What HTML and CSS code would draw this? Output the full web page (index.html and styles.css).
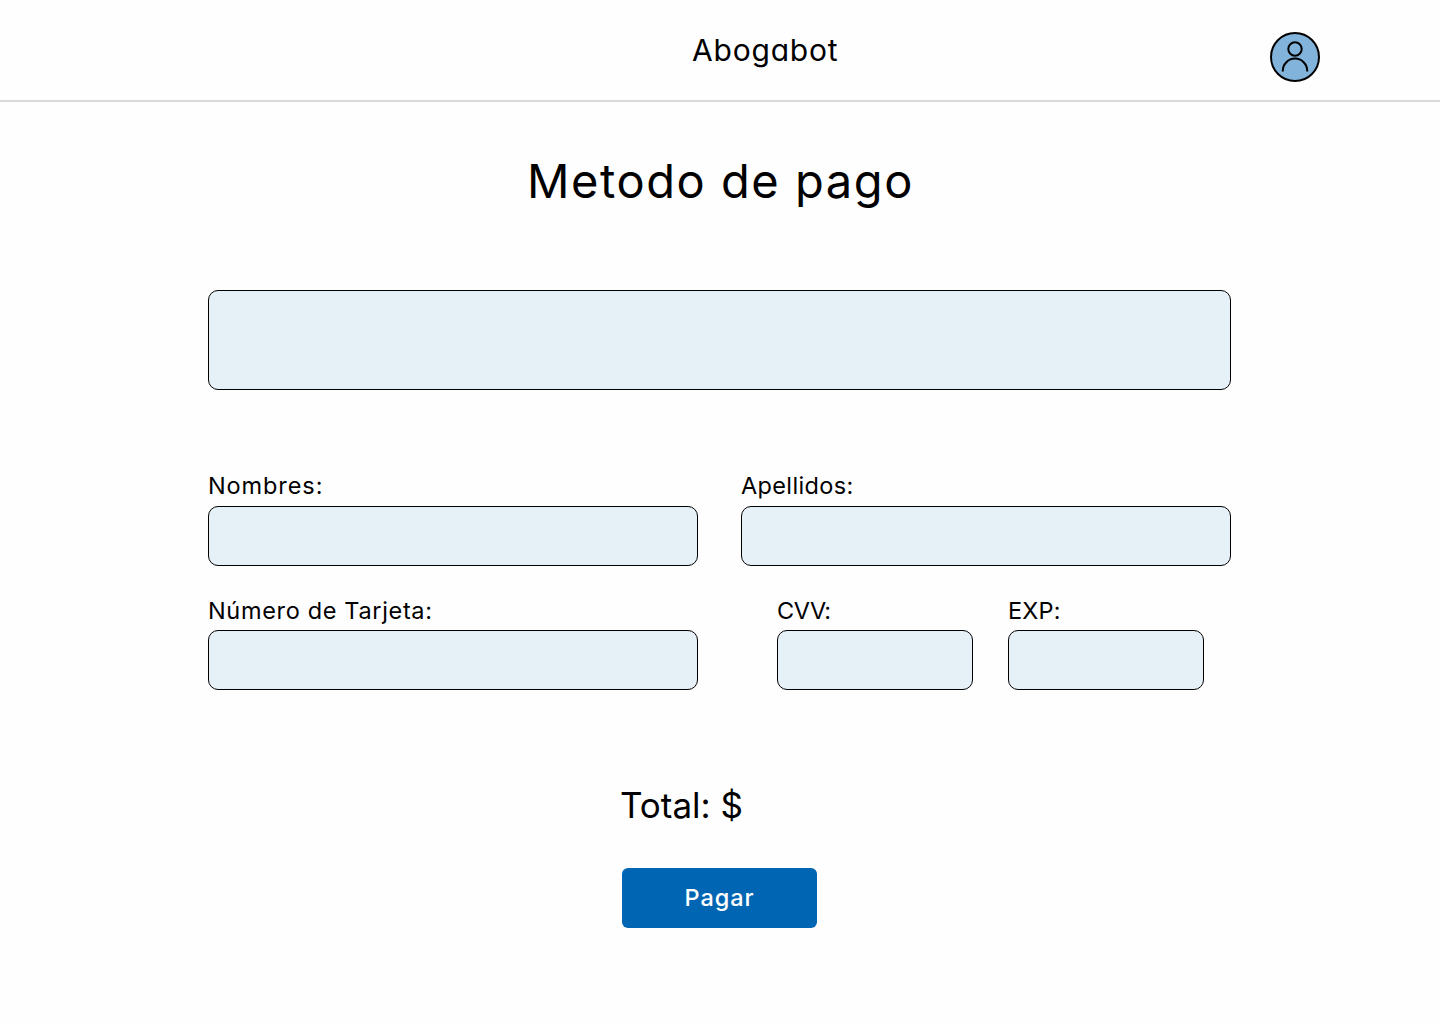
FILE: index.html
```html
<!DOCTYPE html>
<html lang="es">
<head>
<meta charset="utf-8">
<title>Abogabot</title>
<link rel="stylesheet" href="styles.css">
</head>
<body>
<header class="topbar">
  <span class="brand">Abogabot</span>
  <svg class="avatar" viewBox="0 0 50 50" width="50" height="50" fill="none" stroke="#000" stroke-width="2">
    <circle cx="25" cy="25" r="24" fill="#82b3db"/>
    <circle cx="25" cy="17" r="6.7"/>
    <path d="M12.8 39.6V38.8a12.2 12.2 0 0 1 24.4 0V39.6"/>
  </svg>
</header>
<main class="page">
  <h1 class="title">Metodo de pago</h1>
  <div class="box summary"></div>
  <form class="form">
    <div class="row">
      <label class="field wide"><span class="label l-nombres">Nombres:</span><input class="box input"></label>
      <label class="field wide"><span class="label l-apellidos">Apellidos:</span><input class="box input"></label>
    </div>
    <div class="row row-card">
      <label class="field wide"><span class="label l-tarjeta">Número de Tarjeta:</span><input class="box input"></label>
      <div class="codes">
        <label class="field small"><span class="label l-cvv">CVV:</span><input class="box input"></label>
        <label class="field small"><span class="label l-exp">EXP:</span><input class="box input"></label>
      </div>
    </div>
    <div class="checkout">
      <div class="total">Total: $</div>
      <button class="pay" type="button">Pagar</button>
    </div>
  </form>
</main>
</body>
</html>
```
FILE: styles.css
```css
* { box-sizing: border-box; }
body {
  margin: 0;
  min-height: 1024px;
  background: #fefefe;
  color: #000;
  font-family: Inter, "Open Sans", sans-serif;
  font-weight: 400;
}
.topbar {
  display: grid;
  grid-template-columns: 1fr 50px;
  height: 102px;
  padding: 32px 120px 0 692px;
  border-bottom: 2px solid #d9d9d9;
}
.brand {
  font-size: 30px;
  line-height: 37px;
  font-weight: 400;
  letter-spacing: 0.8px;
  font-feature-settings: "cv11";
  white-space: nowrap;
}
.avatar { display: block; }
.page {
  width: 1023px;
  margin-left: 208px;
  padding-top: 49px;
}
.title {
  margin: 0 0 79px;
  padding-left: 319px;
  font-size: 47px;
  line-height: 60px;
  font-weight: 400;
  letter-spacing: 1.55px;
  white-space: nowrap;
}
.box {
  display: block;
  width: 100%;
  background: #e5f0f7;
  border: 1px solid #000;
  border-radius: 10px;
}
.summary { height: 100px; margin-bottom: 80px; }
.row { display: flex; justify-content: space-between; }
.row-card { margin-top: 29px; }
.wide { width: 490px; }
.small { width: 196px; }
.codes { display: flex; gap: 35px; margin-right: 27px; }
.field { display: block; }
.label {
  display: block;
  height: 36px;
  font-size: 23.5px;
  line-height: 32px;
  letter-spacing: 0.66px;
  white-space: nowrap;
}
.l-nombres { letter-spacing: 0.9px; }
.l-apellidos { letter-spacing: 0.35px; }
.l-cvv { letter-spacing: -0.4px; }
.l-exp { letter-spacing: 0.2px; }
.row-card .label { height: 35px; }
.input { height: 60px; padding: 0 12px; font: inherit; font-size: 23px; outline: none; }
.checkout { width: 195px; margin: 93px 0 0 414px; }
.total {
  height: 85px;
  margin-left: -2px;
  font-size: 35px;
  line-height: 45px;
  white-space: nowrap;
}
.pay {
  display: block;
  width: 195px;
  height: 60px;
  padding: 0;
  border: 0;
  border-radius: 6px;
  background: #0066b3;
  color: #fff;
  font-family: inherit;
  font-size: 23.5px;
  font-weight: 500;
  letter-spacing: 0.9px;
  line-height: 60px;
}
```
